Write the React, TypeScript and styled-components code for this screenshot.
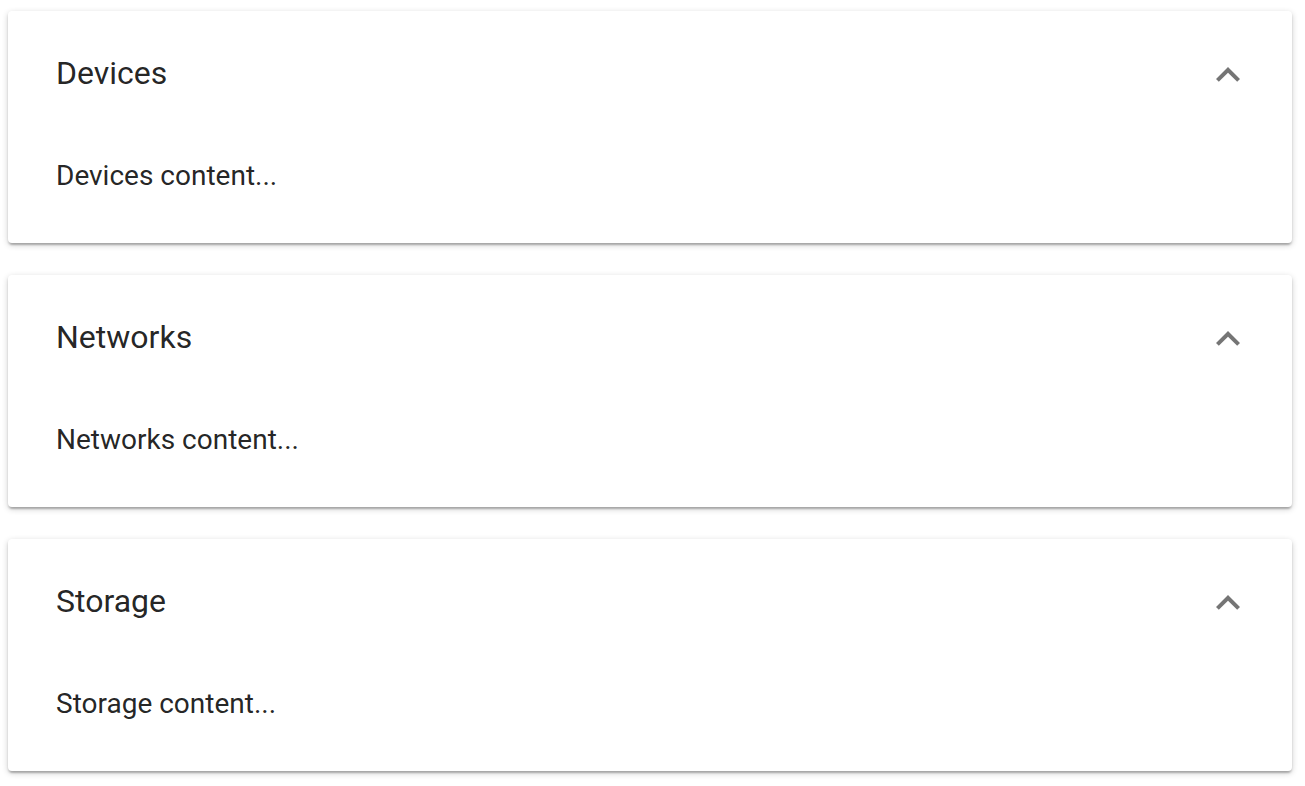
import styled, { createGlobalStyle } from 'styled-components';

const GlobalStyle = createGlobalStyle`
  body {
    margin: 0;
    background: #ffffff;
    font-family: Roboto, 'Liberation Sans', sans-serif;
  }
`;

const Page = styled.div`
  display: flex;
  flex-direction: column;
  gap: 32px;
  padding: 11px 13px 15px 8px;
`;

const Panel = styled.section`
  background: #ffffff;
  border-radius: 4px;
  box-shadow:
    0 2px 6px rgba(0, 0, 0, 0.2),
    0 2px 2px rgba(0, 0, 0, 0.14),
    0 4px 2px -2px rgba(0, 0, 0, 0.12);
`;

const Summary = styled.div`
  height: 128px;
  display: flex;
  align-items: center;
  justify-content: space-between;
  padding: 0 40px 0 48px;
`;

const Title = styled.h2`
  margin: 0 0 5px;
  font-size: 32px;
  font-weight: 400;
  color: rgba(0, 0, 0, 0.87);
`;

const ExpandButton = styled.button`
  width: 48px;
  height: 48px;
  padding: 0;
  border: none;
  background: transparent;
  color: rgba(0, 0, 0, 0.54);
  display: flex;
  align-items: center;
  justify-content: center;
  cursor: pointer;
`;

const Details = styled.div`
  padding: 17px 48px 47px;
  font-size: 28px;
  line-height: 40px;
  color: rgba(0, 0, 0, 0.87);
`;

const ExpandLess = () => (
  <svg width="48" height="48" viewBox="0 0 24 24" fill="currentColor">
    <path d="M12 8l-6 6 1.41 1.41L12 10.83l4.59 4.58L18 14z" />
  </svg>
);

const panels = ['Devices', 'Networks', 'Storage'];

const App = () => {
  return (
    <>
      <GlobalStyle />
      <Page>
        {panels.map((name) => (
          <Panel key={name}>
            <Summary>
              <Title>{name}</Title>
              <ExpandButton aria-label="collapse">
                <ExpandLess />
              </ExpandButton>
            </Summary>
            <Details>{name} content...</Details>
          </Panel>
        ))}
      </Page>
    </>
  );
};

export default App;
